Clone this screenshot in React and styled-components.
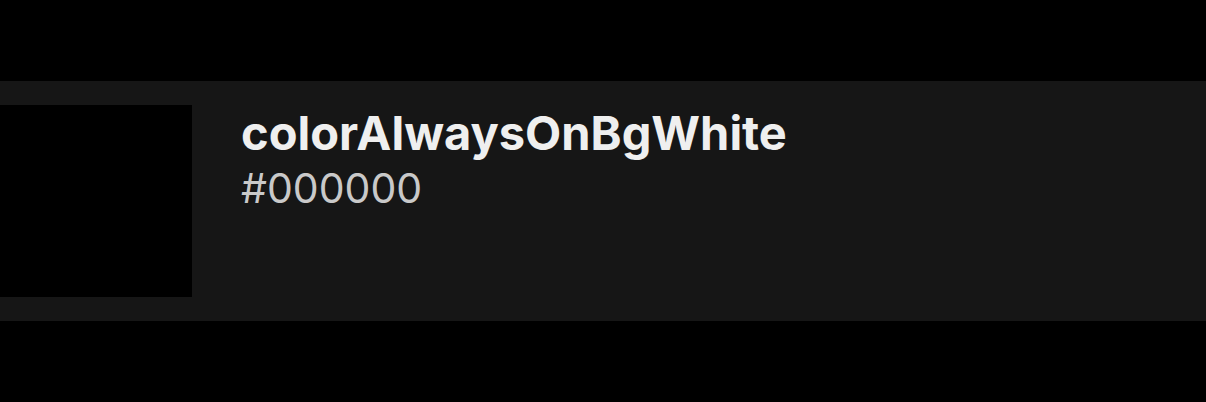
import React from 'react';
import styled, { createGlobalStyle } from 'styled-components';

const GlobalStyle = createGlobalStyle`
  html, body {
    margin: 0;
    padding: 0;
    background: #000;
  }
  body {
    font-family: Inter, "Noto Sans", sans-serif;
    -webkit-font-smoothing: antialiased;
  }
`;

const Page = styled.main`
  width: 1206px;
  height: 402px;
  padding-top: 81px;
  box-sizing: border-box;
  background: #000;
`;

const Row = styled.section`
  display: flex;
  align-items: flex-start;
  gap: 49px;
  height: 240px;
  padding: 24px 0;
  box-sizing: border-box;
  background: #161616;
`;

const Swatch = styled.div`
  flex: 0 0 192px;
  height: 192px;
  background: ${(p) => p.color};
`;

const Info = styled.div`
  display: flex;
  flex-direction: column;
`;

const Name = styled.h3`
  margin: 0;
  font-size: 47px;
  line-height: 56px;
  font-weight: 700;
  color: #efefef;
`;

const Hex = styled.span`
  font-size: 41px;
  line-height: 54px;
  font-weight: 400;
  color: #c9c9c9;
`;

const colors = [{ name: 'colorAlwaysOnBgWhite', value: '#000000' }];

const App = () => (
  <>
    <GlobalStyle />
    <Page>
      {colors.map((c) => (
        <Row key={c.name}>
          <Swatch color={c.value} />
          <Info>
            <Name>{c.name}</Name>
            <Hex>{c.value.toUpperCase()}</Hex>
          </Info>
        </Row>
      ))}
    </Page>
  </>
);

export default App;
